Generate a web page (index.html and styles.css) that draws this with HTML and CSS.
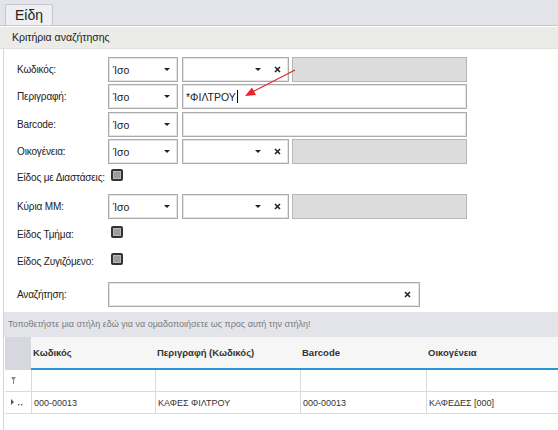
FILE: index.html
```html
<!DOCTYPE html>
<html lang="el">
<head>
<meta charset="utf-8">
<title>Είδη</title>
<link rel="stylesheet" href="styles.css">
</head>
<body>
<div class="tabbar"><div class="tab">Είδη</div></div>
<div class="section-title">Κριτήρια αναζήτησης</div>
<div class="panel">
  <div class="form">
    <div class="row">
      <div class="label">Κωδικός:</div>
      <div class="box sel"><span>Ίσο</span><i class="caret"></i></div>
      <div class="box combo"><i class="caret"></i><svg class="x" viewBox="0 0 7 7"><path d="M1 1L6 6M6 1L1 6"/></svg></div>
      <div class="box disabled"></div>
    </div>
    <div class="row g2">
      <div class="label">Περιγραφή:</div>
      <div class="box sel"><span>Ίσο</span><i class="caret"></i></div>
      <div class="box text"><span>*ΦΙΛΤΡΟΥ</span><i class="cursor"></i></div>
    </div>
    <div class="row g3">
      <div class="label">Barcode:</div>
      <div class="box sel"><span>Ίσο</span><i class="caret"></i></div>
      <div class="box text"></div>
    </div>
    <div class="row g2">
      <div class="label">Οικογένεια:</div>
      <div class="box sel"><span>Ίσο</span><i class="caret"></i></div>
      <div class="box combo"><i class="caret"></i><svg class="x" viewBox="0 0 7 7"><path d="M1 1L6 6M6 1L1 6"/></svg></div>
      <div class="box disabled"></div>
    </div>
    <div class="row chkrow g1">
      <div class="label">Είδος με Διαστάσεις:</div>
      <i class="chk"></i>
    </div>
    <div class="row g5">
      <div class="label">Κύρια ΜΜ:</div>
      <div class="box sel"><span>Ίσο</span><i class="caret"></i></div>
      <div class="box combo"><i class="caret"></i><svg class="x" viewBox="0 0 7 7"><path d="M1 1L6 6M6 1L1 6"/></svg></div>
      <div class="box disabled"></div>
    </div>
    <div class="row chkrow g3">
      <div class="label">Είδος Τμήμα:</div>
      <i class="chk"></i>
    </div>
    <div class="row chkrow g3">
      <div class="label">Είδος Ζυγιζόμενο:</div>
      <i class="chk"></i>
    </div>
    <div class="row g9">
      <div class="label">Αναζήτηση:</div>
      <div class="box search"><svg class="x" viewBox="0 0 7 7"><path d="M1 1L6 6M6 1L1 6"/></svg></div>
    </div>
  </div>
  <div class="group-band">Τοποθετήστε μια στήλη εδώ για να ομαδοποιήσετε ως προς αυτή την στήλη!</div>
  <div class="grid">
    <div class="hd ind"></div>
    <div class="hd">Κωδικός</div>
    <div class="hd">Περιγραφή (Κωδικός)</div>
    <div class="hd">Barcode</div>
    <div class="hd">Οικογένεια</div>

    <div class="cell ind"><svg class="funnel" viewBox="0 0 5 7"><path d="M0 0H5L3 3V7H2V3Z"/></svg></div>
    <div class="cell"></div>
    <div class="cell"></div>
    <div class="cell"></div>
    <div class="cell"></div>

    <div class="cell ind"><svg class="rowind" viewBox="0 0 13 7"><path d="M0 0L3 3L0 6Z"/><rect x="7" y="5" width="1.4" height="1.4"/><rect x="10" y="5" width="1.4" height="1.4"/></svg></div>
    <div class="cell">000-00013</div>
    <div class="cell">ΚΑΦΕΣ ΦΙΛΤΡΟΥ</div>
    <div class="cell">000-00013</div>
    <div class="cell">ΚΑΦΕΔΕΣ [000]</div>
  </div>
</div>
<svg class="arrow" viewBox="0 0 558 430">
  <line x1="295" y1="70" x2="253" y2="91.6"/>
  <polygon points="245,96 256,95 252,87.6"/>
</svg>
</body>
</html>
```
FILE: styles.css
```css
body {
  margin: 0;
  width: 558px;
  height: 430px;
  overflow: hidden;
  position: relative;
  background: #fff;
  color: #222;
  font-family: "Liberation Sans", Arial, sans-serif;
  font-size: 10px;
}

.tabbar {
  height: 25px;
  background: #e3e4ea;
  border-bottom: 1px solid #c4c6d0;
  display: flex;
  align-items: flex-end;
  padding-left: 5px;
}

.tab {
  width: 48px;
  height: 21px;
  box-sizing: border-box;
  background: #eeeff2;
  border: 1px solid #c4c6d0;
  border-bottom: none;
  border-radius: 2px 2px 0 0;
  padding-left: 9px;
  font-size: 14px;
  line-height: 21px;
  color: #222;
}

.section-title {
  margin-top: 1px;
  height: 21px;
  background: #ebebe8;
  border-bottom: 1px solid #e1e1dd;
  padding-left: 12px;
  line-height: 21px;
  font-size: 10.5px;
}

.panel {
  margin-left: 3px;
  border-left: 1px solid #d4d4d4;
  height: 381px;
}

.form {
  display: flex;
  flex-direction: column;
  padding-top: 8px;
  padding-left: 13px;
}

.row {
  display: flex;
  align-items: center;
  height: 25px;
}
.chkrow { height: 24px; }
.g1 { margin-top: 1px; }
.g2 { margin-top: 2px; }
.g3 { margin-top: 3px; }
.g5 { margin-top: 5px; }
.g9 { margin-top: 9px; }

.label {
  flex: none;
  width: 91px;
  white-space: nowrap;
  font-size: 10px;
  letter-spacing: -0.15px;
}

.box {
  flex: none;
  height: 25px;
  box-sizing: border-box;
  border: 1px solid #ababab;
  box-shadow: inset 0 0 0 1px #e4e4e4;
  background: #fff;
  display: flex;
  align-items: center;
  font-size: 10.5px;
}

.sel {
  width: 70px;
  padding: 0 7px 0 4px;
  justify-content: space-between;
}

.combo {
  width: 107px;
  margin-left: 4px;
  justify-content: flex-end;
  padding-right: 7px;
  gap: 13px;
}

.disabled {
  width: 175px;
  margin-left: 3px;
  background: #dcdcdc;
  border-color: #b6b6b6;
  box-shadow: none;
}

.text {
  width: 285px;
  margin-left: 4px;
  padding-left: 3px;
}

.search {
  width: 312px;
  justify-content: flex-end;
  padding-right: 8px;
}

.caret {
  width: 0;
  height: 0;
  border-left: 3px solid transparent;
  border-right: 3px solid transparent;
  border-top: 3px solid #222;
}

.x {
  width: 7px;
  height: 7px;
  fill: none;
  stroke: #222;
  stroke-width: 1.6;
}

.cursor {
  width: 0;
  height: 13px;
  border-left: 1px solid #000;
  margin-left: 1px;
}

.chk {
  width: 12px;
  height: 12px;
  box-sizing: border-box;
  border: 2px solid #333;
  border-radius: 2px;
  background: #9c9c9c;
  box-shadow: inset 0 0 0 1px #b8b8b8;
  margin-left: 3px;
  margin-bottom: 4px;
}

.group-band {
  margin-top: 5px;
  height: 25px;
  line-height: 25px;
  background: #e4e5ea;
  color: #7a7a7a;
  font-size: 9px;
  padding-left: 4px;
  white-space: nowrap;
}

.grid {
  margin-left: 1px;
  display: grid;
  grid-template-columns: 26px 124px 145px 126px 1fr;
  font-size: 9px;
}

.hd {
  height: 33px;
  box-sizing: border-box;
  background: #f6f6f7;
  border-bottom: 2px solid #2a96d8;
  padding-left: 2px;
  display: flex;
  align-items: center;
  font-weight: bold;
  font-size: 9.5px;
  color: #333;
}
.hd.ind {
  background: #d7d8df;
  border-bottom-color: #d7d8df;
}

.cell {
  height: 22px;
  box-sizing: border-box;
  border-bottom: 1px solid #dadada;
  border-left: 1px solid #dadada;
  padding-left: 2px;
  display: flex;
  align-items: center;
  color: #333;
  white-space: nowrap;
}
.cell.ind {
  border-left: none;
  padding-left: 6px;
}

.funnel {
  width: 5px;
  height: 7px;
  fill: #8a8a8a;
}

.rowind {
  width: 13px;
  height: 7px;
  fill: #555;
}

.arrow {
  position: absolute;
  left: 0;
  top: 0;
  width: 558px;
  height: 430px;
  pointer-events: none;
}
.arrow line {
  stroke: #e8232b;
  stroke-width: 1.2;
}
.arrow polygon {
  fill: #e8232b;
}
```
